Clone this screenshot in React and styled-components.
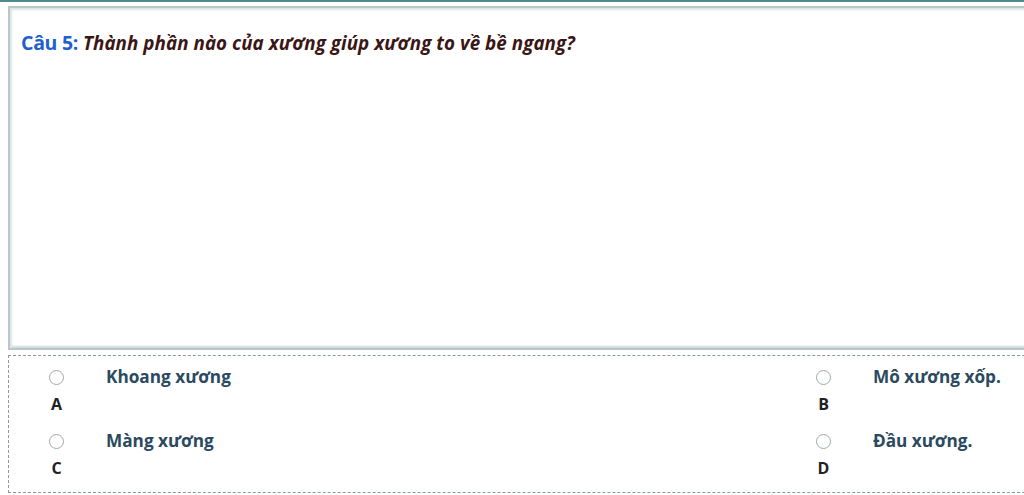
import React from 'react';
import styled, { createGlobalStyle } from 'styled-components';

const GlobalStyle = createGlobalStyle`
  html, body {
    margin: 0;
    padding: 0;
    background: #ffffff;
    overflow: hidden;
  }
  body {
    font-family: "Open Sans", "Noto Sans", sans-serif;
  }
`;

const options = [
  { letter: 'A', text: 'Khoang xương' },
  { letter: 'B', text: 'Mô xương xốp.' },
  { letter: 'C', text: 'Màng xương' },
  { letter: 'D', text: 'Đầu xương.' },
];

const App = () => {
  return (
    <>
      <GlobalStyle />
      <Page>
        <QuestionBox>
          <Title>
            <Label>Câu 5:</Label>
            <Question>Thành phần nào của xương giúp xương to về bề ngang?</Question>
          </Title>
        </QuestionBox>

        <Answers>
          {options.map((o) => (
            <Option key={o.letter}>
              <Pick>
                <Radio />
                <Letter>{o.letter}</Letter>
              </Pick>
              <OptionText>{o.text}</OptionText>
            </Option>
          ))}
        </Answers>
      </Page>
    </>
  );
};

export default App;

const Page = styled.div`
  width: 1060px;
  height: 495px;
  border-top: 2px solid #4f8a8c;
  box-sizing: border-box;
  padding: 4px 0 0 8px;
  display: flex;
  flex-direction: column;
  gap: 5px;
`;

const QuestionBox = styled.div`
  height: 344px;
  box-sizing: border-box;
  border: 2px solid #b9c7c8;
  border-right: none;
  box-shadow: inset 2px 2px 2px #dde6e6, inset 0 -2px 2px #cfd8da;
  padding: 22px 0 0 11px;
`;

const Title = styled.div`
  display: flex;
  align-items: baseline;
  gap: 5px;
  line-height: 26px;
`;

const Label = styled.span`
  color: #1f5fcf;
  font-weight: 700;
  font-size: 19.5px;
  letter-spacing: -0.3px;
`;

const Question = styled.span`
  color: #3b1616;
  font-weight: 700;
  font-style: italic;
  font-size: 18.8px;
  letter-spacing: 0.05px;
`;

const Answers = styled.div`
  height: 138px;
  box-sizing: border-box;
  border: 1px dashed #8e9a9c;
  border-right: none;
  display: grid;
  grid-template-columns: 767px 1fr;
  grid-auto-rows: 64px;
  padding-top: 14px;
`;

const Option = styled.div`
  display: flex;
  align-items: flex-start;
  padding-left: 23px;
`;

const Pick = styled.div`
  width: 48px;
  display: flex;
  flex-direction: column;
  align-items: center;
  gap: 10px;
`;

const Radio = styled.span`
  width: 13px;
  height: 13px;
  border: 1px solid #a3a8ab;
  border-radius: 50%;
  background: #fff;
`;

const Letter = styled.span`
  color: #222;
  font-weight: 700;
  font-size: 16px;
  line-height: 18px;
  margin-left: 1px;
`;

const OptionText = styled.span`
  margin-left: 26px;
  margin-top: -3px;
  color: #2b4a60;
  font-weight: 700;
  font-size: 17.2px;
  line-height: 20px;
`;
